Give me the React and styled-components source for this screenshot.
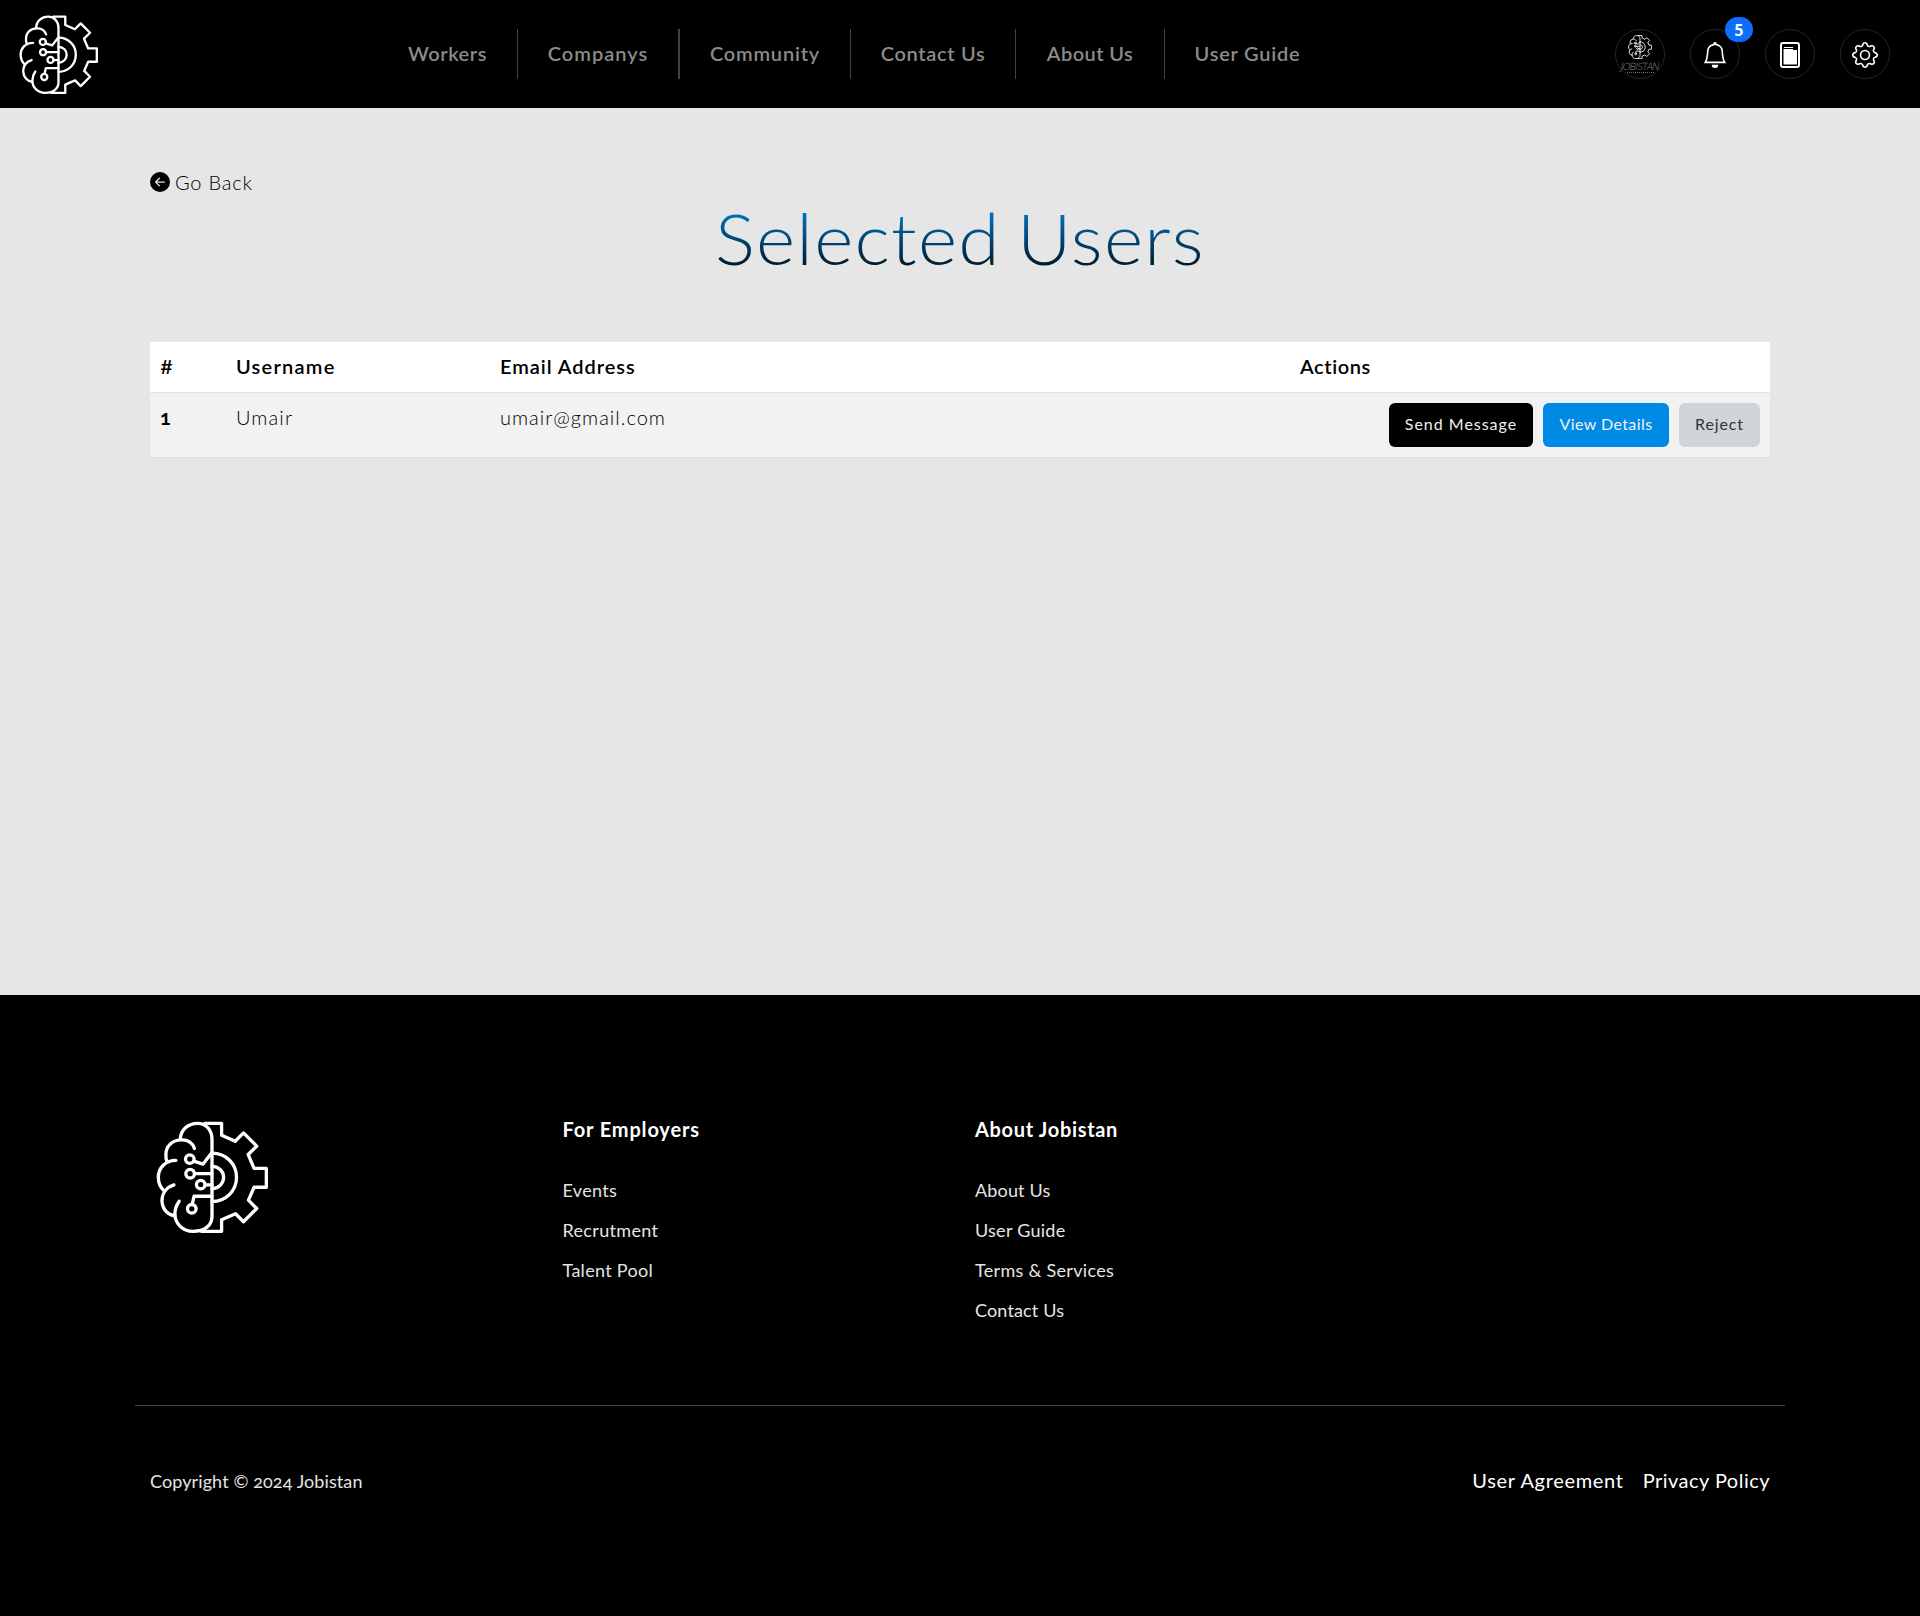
import React from "react";
import styled, { createGlobalStyle } from "styled-components";
import { BsBell, BsGear, BsArrowLeftCircleFill } from "react-icons/bs";

const GlobalStyle = createGlobalStyle`
  *, *::before, *::after { box-sizing: border-box; }
  body {
    margin: 0;
    background: #e6e6e6;
    color: #000;
    font-family: Lato, "Open Sans", sans-serif;
    font-size: 20px;
    font-variant-numeric: oldstyle-nums;
  }
`;

const Text = styled.span`
  letter-spacing: ${(p) => p.$ls || 0}px;
  white-space: nowrap;
`;

/* ---------- header ---------- */

const Header = styled.header`
  display: flex;
  align-items: center;
  height: 108px;
  padding: 0 30px 0 19px;
  background: #000;
`;

const Nav = styled.nav`
  display: flex;
  margin-left: 280px;
`;

const NavItem = styled.a`
  display: flex;
  align-items: center;
  justify-content: center;
  width: ${(p) => p.$w}px;
  height: 50px;
  border-right: ${(p) => p.$rule}px solid #444;
  color: #8b8b8b;
  font-weight: 600;
  line-height: 24px;
  padding-bottom: 3px;
`;

const Tools = styled.div`
  display: flex;
  gap: 25px;
  margin-left: auto;
`;

const RoundButton = styled.button`
  position: relative;
  display: flex;
  flex-direction: column;
  align-items: center;
  justify-content: center;
  width: 50px;
  height: 50px;
  padding: ${(p) => p.$pad || "2px 0 0"};
  border: 1px solid #212529;
  border-radius: 50%;
  background: #000;
  color: #fff;
  font-family: inherit;
`;

const Badge = styled.span`
  position: absolute;
  top: -13px;
  left: 34px;
  width: 28px;
  height: 25px;
  border-radius: 13px;
  background: #0d6efd;
  color: #fff;
  font: 700 15.5px/27px "Open Sans", sans-serif;
  font-variant-numeric: lining-nums;
  text-align: center;
`;

const AvatarName = styled.span`
  margin-top: 3px;
  color: #888;
  font: 300 10px/8px "Open Sans", sans-serif;
  letter-spacing: -0.6px;
  transform: skewX(-12deg);
`;

const AvatarTagline = styled.span`
  width: 27px;
  margin-top: 2px;
  border-top: 1px dotted #777;
`;

/* ---------- main ---------- */

const Main = styled.main`
  height: 887px;
  padding: 63px 150px 0;
`;

const BackLink = styled.a`
  display: flex;
  align-items: center;
  gap: 5px;
  height: 22px;
  font-weight: 300;
  line-height: 22px;
`;

const Title = styled.h1`
  width: max-content;
  height: 84px;
  margin: 5px auto 0;
  padding: 0 0 4px;
  background: linear-gradient(to bottom, #008ae6, #000);
  background-clip: text;
  -webkit-background-clip: text;
  color: transparent;
  font-size: 70px;
  font-weight: 300;
  line-height: 80px;
  word-spacing: -5px;
  transform: scaleX(1.07);
`;

const Table = styled.div`
  margin-top: 60px;
`;

const TableRow = styled.div`
  display: grid;
  grid-template-columns: 76px 264px 800px 1fr;
  align-items: start;
  padding: 10px 10px 0;
  height: ${(p) => (p.$head ? 51 : 65)}px;
  border-bottom: 1px solid ${(p) => (p.$head ? "#dee2e6" : "#dfdfdf")};
  background: ${(p) => (p.$head ? "#fff" : "#f2f2f2")};
  font-weight: ${(p) => (p.$head ? 600 : 300)};
  font-variant-numeric: ${(p) => (p.$head ? "lining-nums" : "oldstyle-nums")};
  line-height: 28px;
`;

const RowNumber = styled.span`
  font-weight: 700;
`;

const Actions = styled.div`
  display: flex;
  justify-content: flex-end;
  gap: 10px;
`;

const tones = {
  dark: ["#000", "#f1f1f1"],
  blue: ["#008ae6", "#f1f1f1"],
  grey: ["#ced4d7", "#333"],
};

const ActionButton = styled.button`
  width: ${(p) => p.$w}px;
  height: 44px;
  padding: 0 0 2px;
  border: 0;
  border-radius: 6px;
  background: ${(p) => tones[p.$tone][0]};
  color: ${(p) => tones[p.$tone][1]};
  font-family: inherit;
  font-size: 16px;
  font-weight: 400;
  line-height: 24px;
`;

/* ---------- footer ---------- */

const Footer = styled.footer`
  height: 621px;
  padding: 120px 135px 0;
  background: #000;
  color: #fff;
`;

const Columns = styled.div`
  display: grid;
  grid-template-columns: repeat(4, 412.5px);
  height: 290px;
`;

const Column = styled.div`
  padding-left: 15px;
`;

const LogoColumn = styled.div`
  padding: 6px 0 0 21px;
`;

const ColumnTitle = styled.h2`
  margin: 0 0 27px;
  font-size: 20px;
  font-weight: 700;
  line-height: 28px;
`;

const FooterLink = styled.a`
  display: block;
  height: 40px;
  color: #e5e5e5;
  font-size: 18px;
  line-height: 40px;
`;

const Bottom = styled.div`
  display: flex;
  justify-content: space-between;
  padding: 60px 15px 0;
  border-top: 1px solid #444;
  line-height: 30px;
`;

const Copyright = styled.div`
  color: #e5e5e5;
  font-size: 18px;
`;

const Legal = styled.div`
  display: flex;
  gap: 19px;
  line-height: 28px;
`;

function Logo({ size, stroke = 10 }) {
  return (
    <svg width={size} height={size} viewBox="78 62 338 338" fill="none" stroke="#fff" strokeWidth={stroke} strokeLinejoin="round" strokeLinecap="round">
      <path d="M151 117C153 87 176 69 203 69C230 69 247 90 247 118V350C247 376 226 395 190 395C157 395 135 370 135 343C135 327 140 315 148 304" />
      <path d="M194 145C188 127 172 118 153 119C125 120 108 140 108 162C107 172 109 180 112 186" />
      <path d="M138 181C105 181 85 205 85 232C85 250 92 264 103 273" />
      <path d="M132 255C110 262 96 280 96 303C97 328 113 346 135 348" />
      <path d="M225 69H276V105L317 123L342 98L382 138L356 163L374 205H411V262H374L357 301L382 326L342 366L318 342L276 360V395H215" />
      <path d="M247 159C290 159 321 192 321 232S290 305 247 305M247 198C268 200 282 214 282 232S268 265 247 267" />
      <path d="M192 183L220 192L247 157M194 221H247M226 255H247M187 314L193 289H247" />
      <circle cx="180" cy="177" r="13" />
      <circle cx="181" cy="221" r="13" />
      <circle cx="213" cy="254" r="13" />
      <circle cx="186" cy="327" r="13" />
    </svg>
  );
}

function BookIcon() {
  return (
    <svg width="20" height="26" viewBox="0 0 20 26" fill="none">
      <rect x="1" y="1" width="18" height="24" rx="2" stroke="#fff" strokeWidth="2" />
      <path d="M4 5.5H13" stroke="#fff" strokeWidth="1" />
      <path d="M3.5 7H13V8H17V22.5H3.5Z" fill="#fff" />
    </svg>
  );
}

const navItems = [
  { label: "Workers", w: 140, ls: 0.53, rule: 1 },
  { label: "Companys", w: 162, ls: 1.02, rule: 2 },
  { label: "Community", w: 171, ls: 0.82, rule: 1 },
  { label: "Contact Us", w: 165, ls: 0.68, rule: 1 },
  { label: "About Us", w: 149, ls: 0.42, rule: 1 },
  { label: "User Guide", w: 165, ls: 0.79, rule: 0 },
];

const footerColumns = [
  {
    title: ["For Employers", 0.84],
    links: [["Events", 0.32], ["Recrutment", 0.33], ["Talent Pool", 0.3]],
  },
  {
    title: ["About Jobistan", 0.68],
    links: [["About Us", 0.15], ["User Guide", 0.26], ["Terms & Services", 0.3], ["Contact Us", 0.15]],
  },
];

export default function App() {
  return (
    <>
      <GlobalStyle />
      <Header>
        <Logo size={79} />
        <Nav>
          {navItems.map((n) => (
            <NavItem key={n.label} $w={n.w} $rule={n.rule}>
              <Text $ls={n.ls}>{n.label}</Text>
            </NavItem>
          ))}
        </Nav>
        <Tools>
          <RoundButton $pad="0">
            <Logo size={24} stroke={12} />
            <AvatarName>JOBISTAN</AvatarName>
            <AvatarTagline />
          </RoundButton>
          <RoundButton>
            <BsBell size={26} />
            <Badge>5</Badge>
          </RoundButton>
          <RoundButton>
            <BookIcon />
          </RoundButton>
          <RoundButton>
            <BsGear size={26} />
          </RoundButton>
        </Tools>
      </Header>

      <Main>
        <BackLink>
          <BsArrowLeftCircleFill size={20} />
          <Text $ls={0.8}>Go Back</Text>
        </BackLink>
        <Title>
          <Text $ls={1.2}>Selected Users</Text>
        </Title>
        <Table>
          <TableRow $head>
            <Text>#</Text>
            <Text $ls={1.25}>Username</Text>
            <Text $ls={0.95}>Email Address</Text>
            <Text $ls={0.6}>Actions</Text>
          </TableRow>
          <TableRow>
            <RowNumber>1</RowNumber>
            <Text $ls={1.1}>Umair</Text>
            <Text $ls={1}>umair@gmail.com</Text>
            <Actions>
              <ActionButton $w={144} $tone="dark"><Text $ls={0.98}>Send Message</Text></ActionButton>
              <ActionButton $w={126} $tone="blue"><Text $ls={0.42}>View Details</Text></ActionButton>
              <ActionButton $w={81} $tone="grey"><Text $ls={0.89}>Reject</Text></ActionButton>
            </Actions>
          </TableRow>
        </Table>
      </Main>

      <Footer>
        <Columns>
          <LogoColumn>
            <Logo size={112} />
          </LogoColumn>
          {footerColumns.map((c) => (
            <Column key={c.title[0]}>
              <ColumnTitle><Text $ls={c.title[1]}>{c.title[0]}</Text></ColumnTitle>
              {c.links.map(([label, ls]) => (
                <FooterLink key={label}><Text $ls={ls}>{label}</Text></FooterLink>
              ))}
            </Column>
          ))}
        </Columns>
        <Bottom>
          <Copyright><Text $ls={0.1}>Copyright © 2024 Jobistan</Text></Copyright>
          <Legal>
            <Text $ls={0.68}>User Agreement</Text>
            <Text $ls={0.48}>Privacy Policy</Text>
          </Legal>
        </Bottom>
      </Footer>
    </>
  );
}
